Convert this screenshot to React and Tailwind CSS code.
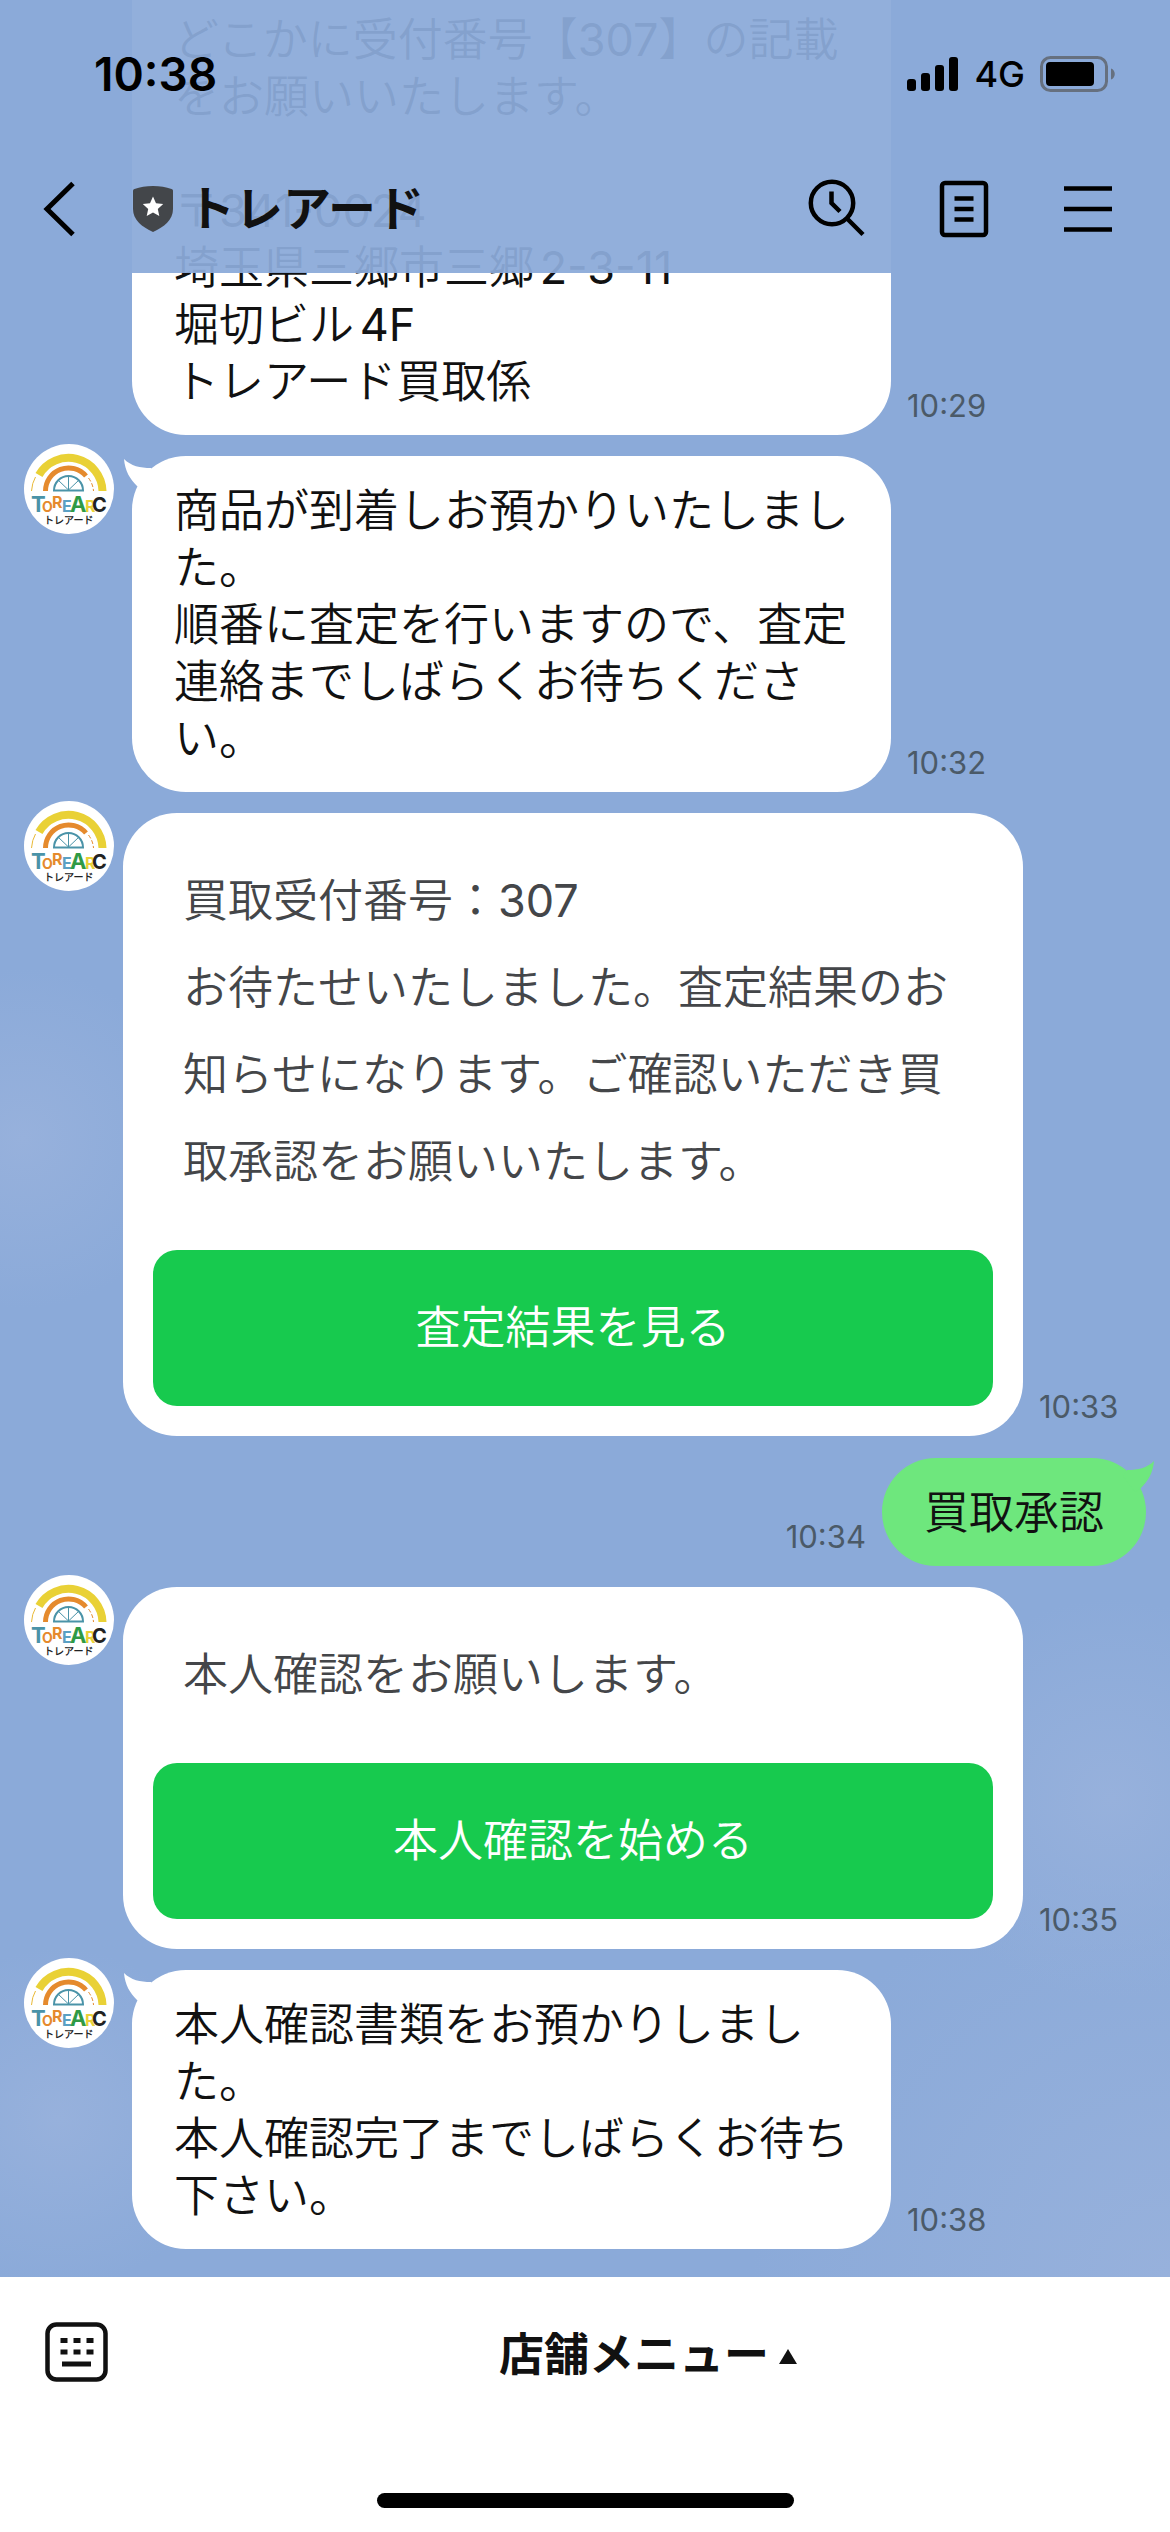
import { useState } from 'react';

const messages = [
  {
    id: 1,
    kind: 'continued',
    time: '10:29',
    lines: [
      'どこかに受付番号【307】の記載',
      'をお願いいたします。',
      '',
      '〒341-0024',
      '埼玉県三郷市三郷2-3-11',
      '堀切ビル4F',
      'トレアード買取係',
    ],
  },
  {
    id: 2,
    kind: 'bubble',
    time: '10:32',
    lines: [
      '商品が到着しお預かりいたしました。',
      '順番に査定を行いますので、査定連絡までしばらくお待ちください。',
    ],
  },
  {
    id: 3,
    kind: 'card',
    time: '10:33',
    lines: [
      '買取受付番号：307',
      'お待たせいたしました。査定結果のお知らせになります。ご確認いただき買取承認をお願いいたします。',
    ],
    action: '査定結果を見る',
  },
  { id: 4, kind: 'mine', time: '10:34', lines: ['買取承認'] },
  {
    id: 5,
    kind: 'card',
    time: '10:35',
    lines: ['本人確認をお願いします。'],
    action: '本人確認を始める',
  },
  {
    id: 6,
    kind: 'bubble',
    time: '10:38',
    lines: [
      '本人確認書類をお預かりしました。',
      '本人確認完了までしばらくお待ち下さい。',
    ],
  },
];

function StatusBar() {
  return (
    <div className="flex h-[148px] items-center justify-between pl-[94px] pr-[54px] text-black">
      <span className="text-[46px] leading-none font-semibold">10:38</span>
      <div className="flex items-center gap-[15px]">
        <svg width="52" height="36" viewBox="0 0 52 36" aria-hidden="true">
          <rect x="0" y="23" width="9" height="12" rx="3" />
          <rect x="14" y="17" width="9" height="18" rx="3" />
          <rect x="28" y="9" width="9" height="26" rx="3" />
          <rect x="42" y="1" width="9" height="34" rx="3" />
        </svg>
        <span className="text-[36px] leading-none font-medium">4G</span>
        <svg width="76" height="36" viewBox="0 0 76 36" aria-hidden="true">
          <rect x="1.5" y="1.5" width="65" height="33" rx="9" fill="none" stroke="#66707f" strokeWidth="3" />
          <rect x="6" y="6" width="48" height="24" rx="4" />
          <path d="M71 12.5c5 1.5 5 9.500 0 11z" fill="#66707f" />
        </svg>
      </div>
    </div>
  );
}

function NavBar() {
  return (
    <div className="flex h-[121px] items-center pl-10 pr-[57px]">
      <button aria-label="戻る" className="flex w-[93px]">
        <svg width="36" height="56" viewBox="0 0 36 56" fill="none" stroke="#000" strokeWidth="5">
          <path d="M33 2.500L7 28l26 25.500" />
        </svg>
      </button>
      <svg width="40" height="46" viewBox="0 0 40 46" aria-hidden="true">
        <path d="M20 0c7 0 13 1 18.500 3 1 .4 1.500 1 1.500 2v18c0 11-9 18-20 23C9 41 0 34 0 23V5c0-1 .5-1.600 1.500-2C7 1 13 0 20 0z" fill="#43464a" />
        <path d="M20 10.500l3 6.700 7.200.8-5.400 4.900 1.500 7.100-6.300-3.600-6.300 3.600 1.500-7.100L9.800 18l7.200-.8z" fill="#fff" />
      </svg>
      <h1 className="ml-[14px] flex-1 text-[48px] leading-none font-bold text-[#111]">トレアード</h1>
      <div className="flex items-center gap-[74px]">
        <button aria-label="検索">
          <svg width="58" height="60" viewBox="0 0 58 60" fill="none" stroke="#000" strokeWidth="4.500">
            <circle cx="25" cy="24" r="21.200" />
            <path d="M24.500 12.500V24l8.500 8.500M40 39.500L56 55.500" />
          </svg>
        </button>
        <button aria-label="ノート">
          <svg width="50" height="58" viewBox="0 0 50 58" fill="none" stroke="#000" strokeWidth="4.500">
            <rect x="3" y="3" width="44" height="52" rx="3" />
            <path d="M15.500 18.500h19M15.500 29h19M15.500 39.500h19" />
          </svg>
        </button>
        <button aria-label="メニュー">
          <svg width="50" height="58" viewBox="0 0 50 58" fill="none" stroke="#000" strokeWidth="4.500">
            <path d="M1 8.500h48M1 29h48M1 49.500h48" />
          </svg>
        </button>
      </div>
    </div>
  );
}

function Avatar() {
  return (
    <svg width="90" height="90" viewBox="0 0 90 90" className="shrink-0 font-bold" role="img" aria-label="トレアード">
      <circle cx="45" cy="45" r="45" fill="#fff" />
      <g fill="none">
        <path d="M78.500 47A34 34 0 0 0 15 31" stroke="#e9d136" strokeWidth="8" />
        <path d="M7.500 47Q8 39 11.500 33" stroke="#e9b936" strokeWidth="1" />
        <path d="M21.500 47A23 23 0 0 1 62 32" stroke="#e58a2d" strokeWidth="5" />
        <path d="M64.500 34Q69 40 69.500 47" stroke="#e58a2d" strokeWidth="1" strokeDasharray="4 2" />
        <path d="M30 46.500a14.500 14.500 0 0 1 29 0z" stroke="#4a93a8" strokeWidth="2" />
        <path d="M44.500 46V32M44.500 46L34 36M44.500 46L55 36" stroke="#4a93a8" strokeWidth="1" />
      </g>
      <text x="7" y="68" fontSize="22" fill="#4a93a8">T</text>
      <text x="18" y="68" fontSize="14" fill="#e58a2d">O</text>
      <text x="28" y="64" fontSize="16" fill="#e58a2d">R</text>
      <text x="38" y="68" fontSize="16" fill="#5aa0c4">E</text>
      <text x="61" y="68" fontSize="16" fill="#e9d136">R</text>
      <text x="46" y="68" fontSize="22" fill="#2f9a45">A</text>
      <text x="68" y="68" fontSize="20" fill="#222">C</text>
      <text x="20" y="80" fontSize="10" fill="#222">トレアード</text>
    </svg>
  );
}

function Time({ children }) {
  return <time className="mb-3 shrink-0 text-[31px] leading-[34px] text-[#4b5a68]">{children}</time>;
}

function Tail({ className }) {
  return (
    <svg width="32" height="32" viewBox="0 0 32 32" className={className} aria-hidden="true">
      <path d="M1 0C8 7 17 9 28 9l4 6-12 16-6-4C7 20 2 12 1 0z" fill="currentColor" />
    </svg>
  );
}

function Lines({ lines }) {
  return lines.map((line, i) => (
    <p key={i}>{line || '\u00a0'}</p>
  ));
}

function Message({ message }) {
  const { kind, lines, time, action } = message;

  if (kind === 'mine') {
    return (
      <div className="mt-[22px] flex items-end justify-end gap-4 pr-6">
        <Time>{time}</Time>
        <div className="relative rounded-[54px] bg-[#6ee77d] px-[42px] pt-[26px] pb-[25px] text-[45px] leading-[57px] text-[#111]">
          <Tail className="absolute top-[3px] -right-[9px] -scale-x-100 text-[#6ee77d]" />
          <Lines lines={lines} />
        </div>
      </div>
    );
  }

  if (kind === 'continued') {
    return (
      <div className="flex items-end gap-4 pl-[132px]">
        <div className="max-w-[759px] flex-1 rounded-b-[54px] bg-white px-[42px] pt-[11px] pb-[25px] text-[45px] leading-[57px] text-[#111]">
          <Lines lines={lines} />
        </div>
        <Time>{time}</Time>
      </div>
    );
  }

  if (kind === 'card') {
    return (
      <div className="mt-[9px] flex items-start gap-[9px] pl-6">
        <Avatar />
        <div className="mt-3 flex flex-1 items-end gap-4">
          <div className="max-w-[900px] flex-1 rounded-[54px] bg-white px-[30px] pt-[44px] pb-[30px]">
            <div className="px-[30px] text-[45px] leading-[87px] text-[#444649]">
              <Lines lines={lines} />
            </div>
            <button className="mt-[45px] h-[156px] w-full rounded-3xl bg-[#17ca4e] text-[45px] text-white">
              {action}
            </button>
          </div>
          <Time>{time}</Time>
        </div>
      </div>
    );
  }

  return (
    <div className="mt-[9px] flex items-start gap-[18px] pl-6">
      <Avatar />
      <div className="mt-3 flex flex-1 items-end gap-4">
        <div className="relative max-w-[759px] flex-1 rounded-[54px] bg-white px-[42px] pt-[26px] pb-[25px] text-[45px] leading-[57px] text-[#111]">
          <Tail className="absolute top-[3px] -left-[9px] text-white" />
          <Lines lines={lines} />
        </div>
        <Time>{time}</Time>
      </div>
    </div>
  );
}

function MenuBar({ open, onToggle }) {
  return (
    <footer className="flex min-h-[255px] flex-1 flex-col items-center justify-between bg-white pb-6">
      <div className="flex h-[150px] w-full items-center">
        <button aria-label="キーボード" className="flex w-[126px] pl-[45px]">
          <svg width="63" height="60" viewBox="0 0 63 60" fill="none" stroke="#111">
            <rect x="2.500" y="2.500" width="58" height="55" rx="9" strokeWidth="4.500" />
            <path d="M15.500 18.500h7M28.500 18.500h7M41.500 18.500h7M15.500 30h7M28.500 30h7M41.500 30h7" strokeWidth="5" />
            <path d="M17 42h29" strokeWidth="5" />
          </svg>
        </button>
        <button
          className="flex flex-1 items-center justify-center gap-[10px] pt-1 text-[45px] leading-none font-bold text-[#111]"
          aria-expanded={open}
          onClick={onToggle}
        >
          店舗メニュー
          <svg width="18" height="15" viewBox="0 0 18 15" className="mt-1" aria-hidden="true">
            <path d="M9 0l9 15H0z" fill="#111" />
          </svg>
        </button>
      </div>
      <div className="h-[15px] w-[417px] rounded-full bg-black"></div>
    </footer>
  );
}

function App() {
  const [open, setOpen] = useState(false);

  return (
    <div className="flex min-h-screen flex-col bg-[#8baad9] font-['Inter','Noto_Sans_CJK_JP',sans-serif]">
      <header className="sticky top-0 z-10 h-[273px] bg-[#8baad9]/94">
        <StatusBar />
        <NavBar />
      </header>
      {/* the chat starts underneath the translucent header */}
      <main className="-mt-[273px] bg-[radial-gradient(circle_at_2%_50%,#97b1dc_0,transparent_170px),radial-gradient(circle_at_95%_79%,#97b1dc_0,transparent_200px),radial-gradient(circle_at_100%_100%,#97b1dc_0,transparent_420px),radial-gradient(circle_at_5%_93%,#97b1dc_0,transparent_170px)] pb-7 font-['Inter','Noto_Sans_CJK_JP_DemiLight','Noto_Sans_CJK_JP',sans-serif] [text-autospace:normal]">
        {messages.map((message) => (
          <Message key={message.id} message={message} />
        ))}
      </main>
      <MenuBar open={open} onToggle={() => setOpen(!open)} />
    </div>
  );
}

export default App;
